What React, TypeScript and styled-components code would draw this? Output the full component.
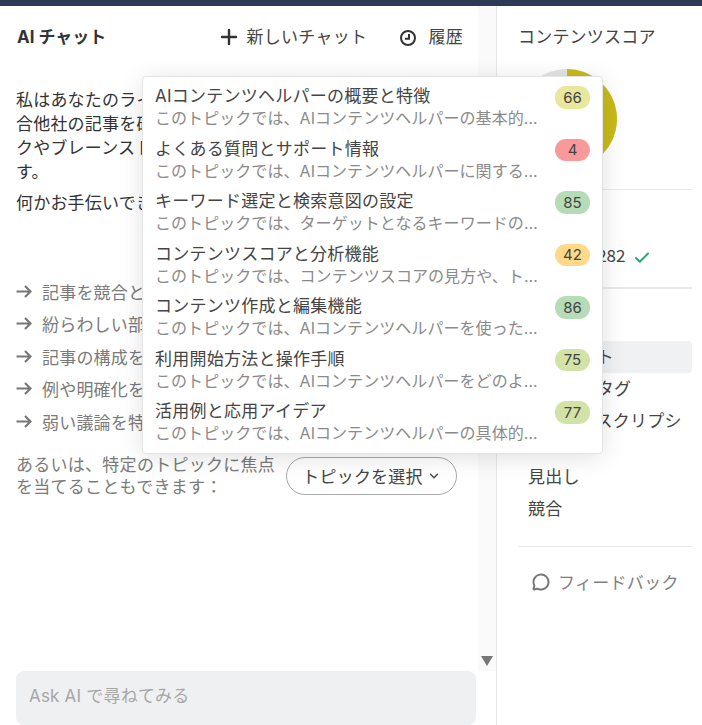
import { createGlobalStyle, styled } from "styled-components";
import { Check, ChevronDown, MessageCircle, Plus } from "lucide-react";

const GlobalStyle = createGlobalStyle`
  html, body {
    margin: 0;
    padding: 0;
    background: #fff;
  }
  body {
    font-family: Inter, "Noto Sans CJK JP", sans-serif;
    color: #333;
  }
`;

const Page = styled.div`
  position: relative;
  width: 702px;
  height: 725px;
  overflow: hidden;
  display: flex;
  flex-direction: column;
`;

const TopBar = styled.div`
  height: 6px;
  flex: none;
  background: #2d3a55;
`;

const Main = styled.div`
  flex: 1;
  min-height: 0;
  display: flex;
`;

const ChatColumn = styled.div`
  width: 496px;
  flex: none;
  display: flex;
  flex-direction: column;
  border-right: 1px solid #e6e7e9;
`;

const ChatBody = styled.div`
  height: 665px;
  flex: none;
  display: flex;
`;

const ChatContent = styled.div`
  width: 478px;
  flex: none;
  padding: 0 16px;
  box-sizing: border-box;
`;

const ScrollTrack = styled.div`
  flex: 1;
  background: #fafafa;
  display: flex;
  align-items: flex-end;
  justify-content: center;
  padding-bottom: 5px;
`;

const ScrollArrow = styled.div`
  width: 0;
  height: 0;
  border-left: 6.5px solid transparent;
  border-right: 6.5px solid transparent;
  border-top: 10px solid #777;
`;

const ChatHeader = styled.div`
  height: 60px;
  padding-bottom: 2px;
  box-sizing: border-box;
  display: flex;
  align-items: center;
  justify-content: space-between;
`;

const ChatTitle = styled.div`
  font-size: 17px;
  font-weight: 700;
  padding-left: 1px;
`;

const HeaderActions = styled.div`
  display: flex;
  align-items: center;
  gap: 33px;
  margin-right: -1px;
`;

const HeaderAction = styled.div<{ $gap: number }>`
  display: flex;
  align-items: center;
  gap: ${({ $gap }) => $gap}px;
  font-size: 17px;
  letter-spacing: 0.3px;
  color: #444;
`;

const PlusIcon = styled(Plus)`
  margin-top: 4px;
`;

const HistoryIcon = styled.svg`
  margin-top: 5px;
`;

const Intro = styled.div`
  margin-top: 22px;
  font-size: 17px;
  line-height: 24px;
  letter-spacing: 0.2px;
`;

const Paragraph = styled.p`
  margin: 0 0 7px;
`;

const Suggestions = styled.div`
  margin-top: 60px;
  display: flex;
  flex-direction: column;
`;

const Suggestion = styled.div`
  height: 32.5px;
  display: flex;
  align-items: center;
  gap: 10px;
  font-size: 17px;
  letter-spacing: 0.2px;
  color: #7a7a7a;
  white-space: nowrap;
`;

const TopicRow = styled.div`
  margin-top: 16px;
  display: flex;
  align-items: center;
  gap: 9px;
`;

const TopicHint = styled.div`
  width: 261px;
  font-size: 17px;
  line-height: 22px;
  letter-spacing: 0.27px;
  color: #7a7a7a;
`;

const TopicButton = styled.button`
  width: 171px;
  height: 38px;
  border: 1px solid #a9a9a9;
  border-radius: 19px;
  background: #fff;
  display: flex;
  align-items: center;
  justify-content: center;
  gap: 4px;
  font-family: inherit;
  font-size: 17px;
  letter-spacing: 0.2px;
  color: #444;
  padding: 0;
`;

const Composer = styled.div`
  width: 460px;
  height: 100px;
  margin-left: 16px;
  box-sizing: border-box;
  padding: 11px 13px;
  border-radius: 8px;
  background: #eff0f2;
  font-size: 17px;
  letter-spacing: 0.2px;
  color: #a6a6a6;
`;

const SidePanel = styled.div`
  flex: 1;
  min-width: 0;
  padding: 0 10px 0 21px;
  overflow: hidden;
`;

const PanelHeading = styled.div`
  height: 60px;
  padding-bottom: 2px;
  box-sizing: border-box;
  display: flex;
  align-items: center;
  font-size: 17px;
  letter-spacing: 0.2px;
  color: #444;
`;

const ScoreChart = styled.div`
  height: 124px;
  padding: 3px 0 0;
  box-sizing: border-box;
  margin-left: -1px;
  border-bottom: 1px solid #e8e9eb;
`;

const WordCount = styled.div`
  height: 99px;
  box-sizing: border-box;
  padding-bottom: 20px;
  border-bottom: 2px solid #e8e9eb;
  display: flex;
  align-items: flex-end;
  gap: 8px;
  font-family: "Noto Sans CJK JP", sans-serif;
  font-size: 17px;
  line-height: 24px;
  color: #444;
`;

const WordLabel = styled.span`
  width: 57px;
`;

const Tabs = styled.div`
  margin-top: 52px;
  padding-bottom: 21px;
  border-bottom: 1px solid #e8e9eb;
  display: flex;
  flex-direction: column;
`;

const Tab = styled.div<{ $active?: boolean }>`
  padding: 4px 10px;
  line-height: 24px;
  border-radius: 4px;
  font-size: 17px;
  letter-spacing: 0.2px;
  color: #444;
  background: ${({ $active }) => ($active ? "#f0f1f3" : "transparent")};
`;

const Feedback = styled.div`
  margin-top: 22px;
  padding-left: 14px;
  display: flex;
  align-items: center;
  gap: 8px;
  font-size: 17px;
  letter-spacing: 0.3px;
  color: #808080;
`;

const TopicMenu = styled.div`
  position: absolute;
  left: 142px;
  top: 76px;
  width: 461px;
  height: 378px;
  box-sizing: border-box;
  padding: 8px 12px;
  background: #fff;
  border: 1px solid #e4e4e4;
  border-radius: 4px;
  box-shadow: 0 4px 24px rgba(0, 0, 0, 0.12);
`;

const TopicItem = styled.div`
  height: 52.5px;
  display: flex;
  justify-content: space-between;
  align-items: flex-start;
`;

const TopicText = styled.div`
  width: 384px;
  min-width: 0;
`;

const TopicName = styled.div`
  font-size: 17px;
  line-height: 23px;
  letter-spacing: 0.25px;
  color: #444;
  white-space: nowrap;
`;

const TopicSummary = styled.div`
  font-size: 16px;
  line-height: 21px;
  letter-spacing: 0.06px;
  color: #8a8a8a;
  white-space: nowrap;
  overflow: hidden;
  text-overflow: ellipsis;
`;

const ScoreBadge = styled.div<{ $color: string }>`
  width: 35px;
  height: 22.5px;
  margin-top: 1px;
  border-radius: 11px;
  background: ${({ $color }) => $color};
  display: flex;
  align-items: center;
  justify-content: center;
  font-size: 15px;
  color: #444;
`;

const topics = [
  { name: "AIコンテンツヘルパーの概要と特徴", summary: "このトピックでは、AIコンテンツヘルパーの基本的な機能と特徴を説明します", score: 66, color: "#e8e79b" },
  { name: "よくある質問とサポート情報", summary: "このトピックでは、AIコンテンツヘルパーに関するよくある質問を扱います", score: 4, color: "#f99a9a" },
  { name: "キーワード選定と検索意図の設定", summary: "このトピックでは、ターゲットとなるキーワードの選び方を説明します", score: 85, color: "#b5dcb6" },
  { name: "コンテンツスコアと分析機能", summary: "このトピックでは、コンテンツスコアの見方や、トピックの分析を説明します", score: 42, color: "#fed98a" },
  { name: "コンテンツ作成と編集機能", summary: "このトピックでは、AIコンテンツヘルパーを使った記事の作成を説明します", score: 86, color: "#b5dcb6" },
  { name: "利用開始方法と操作手順", summary: "このトピックでは、AIコンテンツヘルパーをどのように始めるかを説明します", score: 75, color: "#d3e2a6" },
  { name: "活用例と応用アイデア", summary: "このトピックでは、AIコンテンツヘルパーの具体的な活用例を紹介します", score: 77, color: "#d3e2a6" },
];

const suggestions = [
  "記事を競合と比較する",
  "紛らわしい部分を見つける",
  "記事の構成を改善する",
  "例や明確化を追加する",
  "弱い議論を特定する",
];

function ScorePie() {
  return (
    <svg width="100" height="100" viewBox="0 0 100 100">
      <circle cx="50" cy="50" r="50" fill="#e3e4e6" />
      <path d="M50 50 L50 0 A50 50 0 1 1 3.6 68.6 Z" fill="#c8bb1a" />
    </svg>
  );
}

function ArrowGlyph() {
  return (
    <svg width="16" height="13" viewBox="0 0 16 13" fill="none" stroke="#777" strokeWidth="2.2">
      <path d="M0.5 6.5h14M9 1l5.5 5.5L9 12" />
    </svg>
  );
}

function HistoryGlyph() {
  return (
    <HistoryIcon width="16" height="16" viewBox="0 0 16 16" fill="none" stroke="#333" strokeWidth="2">
      <circle cx="8" cy="8" r="7" />
      <path d="M9 4v4.8H5" />
    </HistoryIcon>
  );
}

export default function App() {
  return (
    <Page>
      <GlobalStyle />
      <TopBar />
      <Main>
        <ChatColumn>
          <ChatBody>
            <ChatContent>
              <ChatHeader>
                <ChatTitle>AI チャット</ChatTitle>
                <HeaderActions>
                  <HeaderAction $gap={5}>
                    <PlusIcon size={24} strokeWidth={2.4} color="#333" />
                    新しいチャット
                  </HeaderAction>
                  <HeaderAction $gap={12}>
                    <HistoryGlyph />
                    履歴
                  </HeaderAction>
                </HeaderActions>
              </ChatHeader>
              <Intro>
                <Paragraph>
                  私はあなたのライティングアシスタントです。記事を
                  <br />
                  合他社の記事を確認し、改善点を見つけ、フィード
                  <br />
                  クやブレーンストーミングをお手伝いできま
                  <br />
                  す。
                </Paragraph>
                <Paragraph>何かお手伝いできることはありますか？</Paragraph>
              </Intro>
              <Suggestions>
                {suggestions.map((text) => (
                  <Suggestion key={text}>
                    <ArrowGlyph />
                    {text}
                  </Suggestion>
                ))}
              </Suggestions>
              <TopicRow>
                <TopicHint>あるいは、特定のトピックに焦点を当てることもできます：</TopicHint>
                <TopicButton>
                  トピックを選択
                  <ChevronDown size={14} strokeWidth={2.4} />
                </TopicButton>
              </TopicRow>
            </ChatContent>
            <ScrollTrack>
              <ScrollArrow />
            </ScrollTrack>
          </ChatBody>
          <Composer>Ask AI で尋ねてみる</Composer>
        </ChatColumn>
        <SidePanel>
          <PanelHeading>コンテンツスコア</PanelHeading>
          <ScoreChart>
            <ScorePie />
          </ScoreChart>
          <WordCount>
            <WordLabel>文字数</WordLabel>
            1,282
            <Check size={18} strokeWidth={2.6} color="#2aa866" />
          </WordCount>
          <Tabs>
            <Tab $active>コンテント</Tab>
            <Tab>タイトルタグ</Tab>
            <Tab>メタディスクリプション</Tab>
            <Tab>見出し</Tab>
            <Tab>競合</Tab>
          </Tabs>
          <Feedback>
            <MessageCircle size={18} strokeWidth={2.6} color="#777" />
            フィードバック
          </Feedback>
        </SidePanel>
      </Main>
      <TopicMenu>
        {topics.map((topic) => (
          <TopicItem key={topic.name}>
            <TopicText>
              <TopicName>{topic.name}</TopicName>
              <TopicSummary>{topic.summary}</TopicSummary>
            </TopicText>
            <ScoreBadge $color={topic.color}>{topic.score}</ScoreBadge>
          </TopicItem>
        ))}
      </TopicMenu>
    </Page>
  );
}
